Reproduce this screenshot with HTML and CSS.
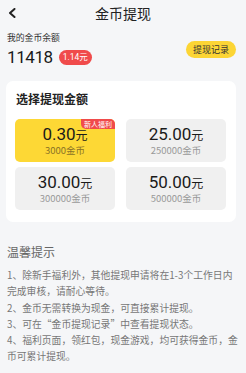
FILE: index.html
```html
<!DOCTYPE html>
<html lang="zh-CN">
<head>
<meta charset="utf-8">
<title>金币提现</title>
<link rel="stylesheet" href="styles.css">
</head>
<body>
<div class="page">
  <header class="topbar">
    <span class="back">
      <svg width="8" height="10" viewBox="0 0 8 10"><path d="M6.5 1 L2 5 L6.5 9" fill="none" stroke="#222" stroke-width="2" stroke-linecap="round" stroke-linejoin="round"/></svg>
    </span>
    <h1 class="title">金币提现</h1>
    <span></span>
  </header>

  <section class="balance">
    <div class="bal-info">
      <div class="bal-label">我的金币余额</div>
      <div class="bal-row">
        <span class="coins">11418</span>
        <span class="cash">1.14元</span>
      </div>
    </div>
    <a class="record-btn">提现记录</a>
  </section>

  <section class="card">
    <h2 class="card-title">选择提现金额</h2>
    <div class="options">
      <div class="opt active">
        <span class="tag">新人福利</span>
        <div class="amt">0.30<small>元</small></div>
        <div class="sub">3000金币</div>
      </div>
      <div class="opt">
        <div class="amt">25.00<small>元</small></div>
        <div class="sub">250000金币</div>
      </div>
      <div class="opt">
        <div class="amt">30.00<small>元</small></div>
        <div class="sub">300000金币</div>
      </div>
      <div class="opt">
        <div class="amt">50.00<small>元</small></div>
        <div class="sub">500000金币</div>
      </div>
    </div>
  </section>

  <section class="tips">
    <h3 class="tips-title">温馨提示</h3>
    <p>1、除新手福利外，其他提现申请将在1-3个工作日内完成审核，请耐心等待。</p>
    <p>2、金币无需转换为现金，可直接累计提现。</p>
    <p>3、可在“金币提现记录”中查看提现状态。</p>
    <p>4、福利页面，领红包，现金游戏，均可获得金币，金币可累计提现。</p>
  </section>
</div>
</body>
</html>
```
FILE: styles.css
```css
html, body {
  margin: 0;
  padding: 0;
}
body {
  background: #f5f6f8;
  font-family: "Noto Sans CJK SC", "Noto Sans", sans-serif;
  color: #222;
}
.page {
  width: 246px;
  min-height: 373px;
}
.topbar {
  height: 26px;
  display: grid;
  grid-template-columns: 30px 1fr 30px;
  align-items: center;
}
.back {
  display: flex;
  align-items: center;
  padding-left: 8px;
  height: 26px;
}
.back svg {
  display: block;
}
.title {
  margin: 0;
  font-size: 14px;
  font-weight: 400;
  text-align: center;
  line-height: 26px;
  color: #222;
}
.balance {
  display: flex;
  align-items: center;
  justify-content: space-between;
  padding: 6px 10px 0 7px;
}
.bal-label {
  font-size: 8.8px;
  line-height: 12px;
  color: #333;
}
.bal-row {
  display: flex;
  align-items: center;
  height: 20px;
  margin-top: 3px;
}
.coins {
  font-family: Roboto, "Noto Sans", sans-serif;
  font-size: 17px;
  letter-spacing: -0.4px;
  color: #1a1a1a;
  line-height: 20px;
}
.cash {
  margin-left: 6px;
  height: 15px;
  line-height: 15px;
  padding: 0 4px;
  border-radius: 8px;
  background: #f04b4b;
  color: #fff;
  font-size: 8.5px;
  font-family: Roboto, "Noto Sans CJK SC", sans-serif;
}
.record-btn {
  height: 17px;
  line-height: 17px;
  padding: 0 7px;
  border-radius: 9px;
  background: #fcd535;
  color: #333;
  font-size: 9px;
}
.card {
  margin: 14px 10px 0 6px;
  background: #fff;
  border-radius: 7px;
  padding: 10px 10px 12px 9px;
}
.card-title {
  margin: 0 0 12px 1px;
  font-size: 12px;
  line-height: 16px;
  font-weight: 700;
  color: #222;
}
.options {
  display: grid;
  grid-template-columns: 1fr 1fr;
  column-gap: 11px;
  row-gap: 5px;
}
.opt {
  position: relative;
  height: 43px;
  border-radius: 5px;
  background: #f0f0f0;
  display: flex;
  flex-direction: column;
  align-items: center;
  justify-content: center;
}
.opt.active {
  background: #fdd835;
}
.amt {
  font-family: Roboto, "Noto Sans CJK SC", sans-serif;
  font-size: 17px;
  line-height: 18px;
  color: #1a1a1a;
}
.amt small {
  font-family: "Noto Sans CJK SC", sans-serif;
  font-size: 12px;
}
.sub {
  font-size: 9.5px;
  line-height: 12px;
  color: #999;
}
.opt.active .sub {
  color: #8a7226;
}
.tag {
  position: absolute;
  top: 0;
  right: 0;
  height: 10px;
  line-height: 10px;
  padding: 0 3px;
  font-size: 7px;
  color: #fff;
  background: #f04b4b;
  border-radius: 0 5px 0 5px;
}
.tips {
  margin-top: 21px;
  padding: 0 6px 0 7px;
}
.tips-title {
  margin: 0 0 6px;
  font-size: 12px;
  line-height: 18px;
  font-weight: 400;
  color: #666;
}
.tips p {
  margin: 0;
  font-size: 9.8px;
  line-height: 16.3px;
  color: #777;
}
```
